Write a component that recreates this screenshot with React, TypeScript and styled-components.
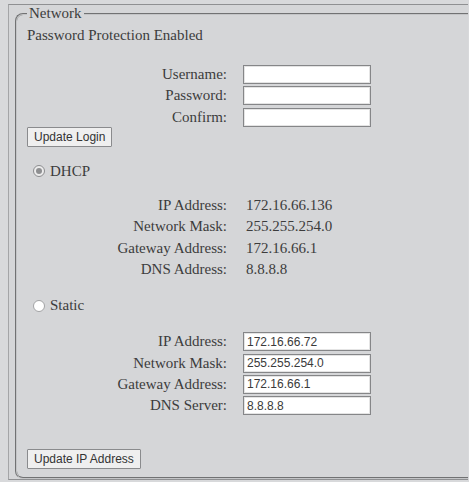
import React from "react";
import styled, { createGlobalStyle } from "styled-components";

const Global = createGlobalStyle`
  html, body {
    margin: 0;
    padding: 0;
    background: #d8d9db;
    overflow: hidden;
  }
  body {
    font-family: "Liberation Serif", "Times New Roman", serif;
    font-size: 15px;
    line-height: 17px;
    color: #3c3c3c;
  }
`;

/* Outer page panel; the group box runs on past its right side */
const Frame = styled.div`
  margin: 4px 0 0 8px;
  width: 460px;
  overflow: hidden;
  border-top: 1px solid #8f9092;
  border-left: 1px solid #a4a5a7;
  border-bottom: 1px solid #8f9092;
  padding: 0 0 0 6px;
  background: #d5d6d8;
  box-sizing: border-box;
`;

const Group = styled.fieldset`
  width: 520px;
  box-sizing: border-box;
  margin: 0;
  padding: 0 10px 8px 10px;
  border: 2px groove #c4c5c7;
  border-radius: 8px;
  min-width: 0;
`;

const Legend = styled.legend`
  padding: 0 2px;
  font-size: 15px;
  line-height: 17px;
`;

const Status = styled.div`
  margin-top: 5px;
`;

const FormGrid = styled.div<{ $top: number }>`
  display: grid;
  grid-template-columns: 200px 128px;
  grid-auto-rows: 21.3px;
  column-gap: 16px;
  align-items: center;
  margin-top: ${(p) => p.$top}px;
`;

const Label = styled.span`
  text-align: right;
  white-space: nowrap;
`;

const Value = styled.span`
  padding-left: 3px;
  white-space: nowrap;
`;

const Field = styled.input`
  box-sizing: border-box;
  width: 128px;
  height: 19px;
  margin: 0;
  padding: 0 3px;
  border: 1px solid #858688;
  box-shadow: inset 0 0 0 1px #e4e4e4;
  background: #ffffff;
  font-family: "Liberation Sans", Arial, sans-serif;
  font-size: 12px;
  color: #3a3a3a;
  outline: none;
`;

const Button = styled.button<{ $top: number }>`
  display: block;
  box-sizing: border-box;
  height: 20px;
  margin: ${(p) => p.$top}px 0 0 0;
  padding: 0 6px;
  border: 1px solid #8a8b8d;
  border-radius: 1px;
  background: #efefef;
  font-family: "Liberation Sans", Arial, sans-serif;
  font-size: 12px;
  color: #333333;
`;

const Choice = styled.label<{ $top: number }>`
  display: flex;
  align-items: center;
  gap: 5px;
  margin-top: ${(p) => p.$top}px;
  padding-left: 6px;
`;

const Dot = styled.span<{ $on: boolean }>`
  box-sizing: border-box;
  width: 12px;
  height: 12px;
  border-radius: 50%;
  border: 1px solid ${(p) => (p.$on ? "#8c8d8f" : "#a2a3a5")};
  background: ${(p) => (p.$on ? "#ececec" : "#ffffff")};
  display: flex;
  align-items: center;
  justify-content: center;
  &::after {
    content: "";
    width: 6px;
    height: 6px;
    border-radius: 50%;
    background: ${(p) => (p.$on ? "#8e8f91" : "transparent")};
  }
`;

const dhcp = [
  ["IP Address:", "172.16.66.136"],
  ["Network Mask:", "255.255.254.0"],
  ["Gateway Address:", "172.16.66.1"],
  ["DNS Address:", "8.8.8.8"],
];

const statics = [
  ["IP Address:", "172.16.66.72"],
  ["Network Mask:", "255.255.254.0"],
  ["Gateway Address:", "172.16.66.1"],
  ["DNS Server:", "8.8.8.8"],
];

export default function App() {
  return (
    <>
      <Global />
      <Frame>
        <Group>
          <Legend>Network</Legend>
          <Status>Password Protection Enabled</Status>
          <FormGrid $top={20}>
            <Label>Username:</Label>
            <Field type="text" />
            <Label>Password:</Label>
            <Field type="password" />
            <Label>Confirm:</Label>
            <Field type="password" />
          </FormGrid>
          <Button $top={-1}>Update Login</Button>
          <Choice $top={16}>
            <Dot $on={true} />
            DHCP
          </Choice>
          <FormGrid $top={15}>
            {dhcp.map(([k, v]) => (
              <React.Fragment key={k}>
                <Label>{k}</Label>
                <Value>{v}</Value>
              </React.Fragment>
            ))}
          </FormGrid>
          <Choice $top={17}>
            <Dot $on={false} />
            Static
          </Choice>
          <FormGrid $top={17}>
            {statics.map(([k, v]) => (
              <React.Fragment key={k}>
                <Label>{k}</Label>
                <Field type="text" defaultValue={v} />
              </React.Fragment>
            ))}
          </FormGrid>
          <Button $top={33}>Update IP Address</Button>
        </Group>
      </Frame>
    </>
  );
}
